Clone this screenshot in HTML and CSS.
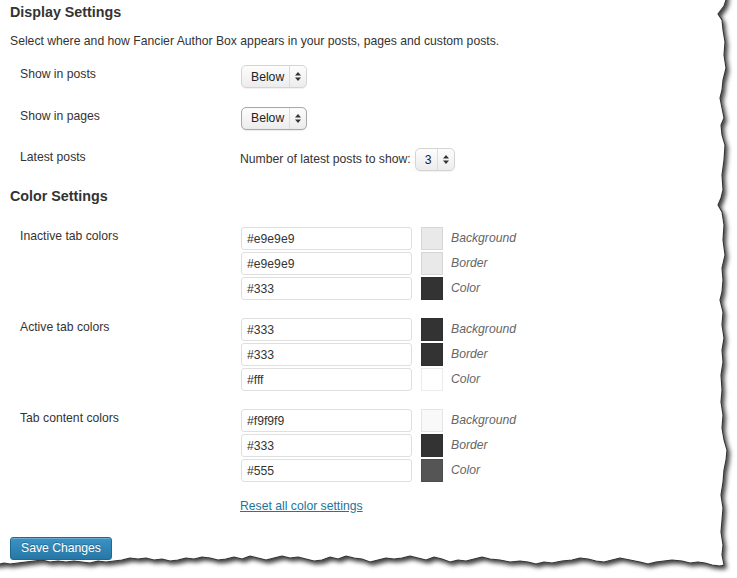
FILE: index.html
```html
<!DOCTYPE html>
<html lang="en">
<head>
<meta charset="utf-8">
<title>Fancier Author Box Settings</title>
<link rel="stylesheet" href="styles.css">
</head>
<body>
<svg class="torn" width="737" height="578" viewBox="0 0 737 578" aria-hidden="true">
  <defs>
    <filter id="shadow" x="-5%" y="-5%" width="115%" height="115%">
      <feDropShadow dx="2.5" dy="3" stdDeviation="2.2" flood-color="#000" flood-opacity="0.75"/>
    </filter>
  </defs>
  <path filter="url(#shadow)" fill="#fff" stroke="#333" stroke-width="1.1"
    d="M-20,-20 L726,-20 L726,0 L724,6 L718,14 L722,20 L723,30 L725,42 L724,55 L726,68 L723,80 L722,90 L720,98 L722,108 L724,118 L721,125 L722,135 L725,145 L724,160 L722,175 L723,190 L721,198 L718,205 L722,212 L724,225 L723,240 L725,255 L722,268 L723,280 L722,292 L720,300 L723,312 L722,325 L724,338 L722,350 L723,362 L721,375 L722,390 L721,402 L723,415 L722,428 L724,440 L727,450 L726,460 L724,470 L723,482 L721,495 L723,508 L722,520 L721,532 L723,545 L722,555 L724,565 L720,566 L712,565 L705,563 L698,562 L690,563 L682,561 L672,560 L664,561 L656,562 L648,564 L640,562 L630,560 L620,558 L612,560 L604,562 L596,561 L588,559 L580,558 L572,560 L562,561 L552,563 L544,562 L536,564 L528,562 L520,561 L510,562 L500,560 L490,559 L482,557 L474,559 L466,561 L458,560 L450,562 L442,559 L434,557 L426,560 L418,558 L410,556 L402,558 L394,559 L386,558 L378,560 L370,562 L362,559 L354,558 L346,556 L338,559 L330,557 L322,560 L314,561 L306,559 L298,557 L290,558 L282,556 L274,558 L266,560 L258,558 L250,556 L242,559 L234,557 L226,559 L218,560 L210,558 L202,557 L194,559 L186,558 L178,560 L170,561 L162,559 L154,560 L146,558 L138,559 L130,558 L122,560 L114,561 L106,562 L98,561 L90,563 L82,562 L74,561 L66,562 L58,561 L50,562 L42,560 L34,561 L26,562 L18,563 L10,564 L4,563 L0,564 L-20,564 Z"/>
</svg>

<div class="page">
  <h2 class="title">Display Settings</h2>
  <p class="desc">Select where and how Fancier Author Box appears in your posts, pages and custom posts.</p>

  <div class="form display">
    <div class="row">
      <div class="label">Show in posts</div>
      <div class="field">
        <span class="select">
          <span class="select-value">Below</span>
          <span class="select-arrows"><svg width="6" height="9" viewBox="0 0 6 9"><path d="M3,0 L6,3.5 L0,3.5 Z M0,5.5 L6,5.5 L3,9 Z" fill="#333"/></svg></span>
        </span>
      </div>
    </div>
    <div class="row">
      <div class="label">Show in pages</div>
      <div class="field">
        <span class="select focused">
          <span class="select-value">Below</span>
          <span class="select-arrows"><svg width="6" height="9" viewBox="0 0 6 9"><path d="M3,0 L6,3.5 L0,3.5 Z M0,5.5 L6,5.5 L3,9 Z" fill="#333"/></svg></span>
        </span>
      </div>
    </div>
    <div class="row">
      <div class="label">Latest posts</div>
      <div class="field inline">
        <span class="inline-text">Number of latest posts to show:</span>
        <span class="select small">
          <span class="select-value">3</span>
          <span class="select-arrows"><svg width="6" height="9" viewBox="0 0 6 9"><path d="M3,0 L6,3.5 L0,3.5 Z M0,5.5 L6,5.5 L3,9 Z" fill="#333"/></svg></span>
        </span>
      </div>
    </div>
  </div>

  <h2 class="title color-title">Color Settings</h2>

  <div class="form colors">
    <div class="row">
      <div class="label">Inactive tab colors</div>
      <div class="field stack">
        <div class="color-row"><input class="text" type="text" value="#e9e9e9"><span class="swatch" style="background:#e9e9e9"></span><em class="hint">Background</em></div>
        <div class="color-row"><input class="text" type="text" value="#e9e9e9"><span class="swatch" style="background:#e9e9e9"></span><em class="hint">Border</em></div>
        <div class="color-row"><input class="text" type="text" value="#333"><span class="swatch" style="background:#333"></span><em class="hint">Color</em></div>
      </div>
    </div>
    <div class="row">
      <div class="label">Active tab colors</div>
      <div class="field stack">
        <div class="color-row"><input class="text" type="text" value="#333"><span class="swatch" style="background:#333"></span><em class="hint">Background</em></div>
        <div class="color-row"><input class="text" type="text" value="#333"><span class="swatch" style="background:#333"></span><em class="hint">Border</em></div>
        <div class="color-row"><input class="text" type="text" value="#fff"><span class="swatch" style="background:#fff"></span><em class="hint">Color</em></div>
      </div>
    </div>
    <div class="row">
      <div class="label">Tab content colors</div>
      <div class="field stack">
        <div class="color-row"><input class="text" type="text" value="#f9f9f9"><span class="swatch" style="background:#f9f9f9"></span><em class="hint">Background</em></div>
        <div class="color-row"><input class="text" type="text" value="#333"><span class="swatch" style="background:#333"></span><em class="hint">Border</em></div>
        <div class="color-row"><input class="text" type="text" value="#555"><span class="swatch" style="background:#555"></span><em class="hint">Color</em></div>
      </div>
    </div>
    <div class="row reset-row">
      <div class="label"></div>
      <div class="field"><a class="reset" href="#">Reset all color settings</a></div>
    </div>
  </div>

  <button class="save" type="button">Save Changes</button>
</div>
</body>
</html>
```

FILE: styles.css
```css
html {
  margin: 0;
  padding: 0;
  background: #fff;
}

body {
  margin: 0;
  padding: 0;
  font-family: "Liberation Sans", Arial, sans-serif;
  font-size: 12.2px;
  color: #333;
  width: 737px;
  height: 578px;
  overflow: hidden;
}

.torn {
  position: absolute;
  top: 0;
  left: 0;
  z-index: -1;
}

.page {
  padding: 3px 0 0 10px;
}

.title {
  margin: 0;
  font-size: 14.3px;
  line-height: 18px;
  font-weight: bold;
  color: #333;
}

.desc {
  margin: 12px 0 15px;
  line-height: 17px;
}

.form {
  display: flex;
  flex-direction: column;
}

.form.display {
  gap: 18.5px;
}

.row {
  display: flex;
  align-items: flex-start;
  padding-left: 10px;
}

.label {
  width: 220px;
  flex: none;
  line-height: 17px;
  padding-top: 1px;
}

.field {
  display: flex;
}

.field.inline {
  align-items: center;
  gap: 3px;
}

.inline-text {
  line-height: 17px;
}

.select {
  margin-left: 1px;
  display: inline-flex;
  align-items: stretch;
  height: 23px;
  box-sizing: border-box;
  border: 1px solid #d4d4d4;
  border-radius: 5px;
  background: linear-gradient(#fdfdfd, #ececec);
  box-shadow: 0 1px 1px rgba(0, 0, 0, 0.06);
}

.select.focused {
  border-color: #a9a9a9;
  box-shadow: inset 0 0 1px rgba(0, 0, 0, 0.15), 0 1px 1px rgba(0, 0, 0, 0.08);
}

.select-value {
  display: flex;
  align-items: center;
  width: 48px;
  padding-left: 9px;
  box-sizing: border-box;
  border-right: 1px solid #dcdcdc;
  color: #222;
}

.select.small .select-value {
  width: 22px;
}

.select-arrows {
  display: flex;
  align-items: center;
  justify-content: center;
  width: 16px;
}

.color-title {
  margin-top: 16px;
}

.form.colors {
  margin-top: 22px;
  gap: 18px;
}

.stack {
  flex-direction: column;
  gap: 2px;
}

.color-row {
  display: flex;
  align-items: center;
  height: 23px;
}

.text {
  margin: 0 0 0 1px;
  width: 171px;
  height: 23px;
  box-sizing: border-box;
  border: 1px solid #dfdfdf;
  border-radius: 3px;
  padding: 0 0 0 5px;
  font-family: "Liberation Sans", Arial, sans-serif;
  font-size: 12.2px;
  color: #333;
  background: #fff;
  outline: none;
}

.swatch {
  margin-left: 9px;
  width: 22px;
  height: 23px;
  box-sizing: border-box;
  border: 1px solid rgba(0, 0, 0, 0.08);
}

.hint {
  margin-left: 8px;
  font-style: italic;
  color: #666;
  line-height: 17px;
}

.reset-row {
  margin-top: -2px;
}

.reset {
  color: #21759b;
  text-decoration: underline;
  line-height: 17px;
}

.save {
  margin-top: 22px;
  height: 23px;
  padding: 0 10px;
  border: 1px solid #1e6a92;
  border-radius: 3px;
  background: linear-gradient(#3b93c4, #2677a6);
  color: #fff;
  font-family: "Liberation Sans", Arial, sans-serif;
  font-size: 12.2px;
  line-height: 21px;
  text-shadow: 0 -1px 0 rgba(0, 0, 0, 0.25);
  box-shadow: inset 0 1px 0 rgba(255, 255, 255, 0.25);
  cursor: pointer;
}
```
